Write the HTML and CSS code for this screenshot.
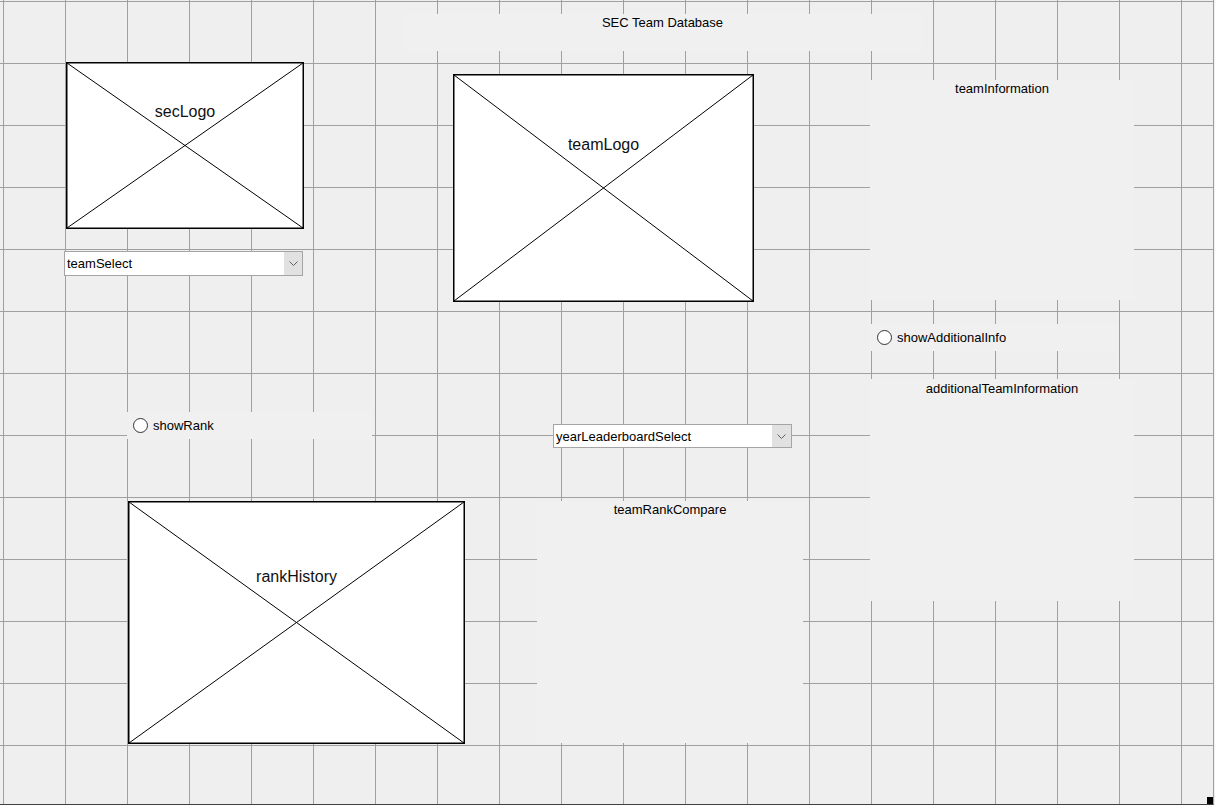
FILE: index.html
```html
<!DOCTYPE html>
<html>
<head>
<meta charset="utf-8">
<link rel="stylesheet" href="styles.css">
</head>
<body>
<div class="form">
  <div class="ctl title-panel"><span class="label">SEC Team Database</span></div>

  <div class="ctl img sec-logo">
    <svg class="cross" viewBox="0 0 100 100" preserveAspectRatio="none"><line x1="0" y1="0" x2="100" y2="100"/><line x1="100" y1="0" x2="0" y2="100"/></svg>
    <span class="img-label">secLogo</span>
  </div>

  <div class="ctl combo team-select">
    <span class="combo-text">teamSelect</span>
    <span class="combo-btn"><svg viewBox="0 0 9 5" width="9" height="5"><polyline points="0.5,0.5 4.5,4.5 8.5,0.5"/></svg></span>
  </div>

  <div class="ctl img team-logo">
    <svg class="cross" viewBox="0 0 100 100" preserveAspectRatio="none"><line x1="0" y1="0" x2="100" y2="100"/><line x1="100" y1="0" x2="0" y2="100"/></svg>
    <span class="img-label">teamLogo</span>
  </div>

  <div class="ctl panel team-info"><span class="label">teamInformation</span></div>

  <div class="ctl radio show-add"><span class="dot"></span><span class="radio-text">showAdditionalInfo</span></div>

  <div class="ctl panel add-info"><span class="label">additionalTeamInformation</span></div>

  <div class="ctl radio show-rank"><span class="dot"></span><span class="radio-text">showRank</span></div>

  <div class="ctl combo year-select">
    <span class="combo-text">yearLeaderboardSelect</span>
    <span class="combo-btn"><svg viewBox="0 0 9 5" width="9" height="5"><polyline points="0.5,0.5 4.5,4.5 8.5,0.5"/></svg></span>
  </div>

  <div class="ctl panel rank-compare"><span class="label">teamRankCompare</span></div>

  <div class="ctl img rank-history">
    <svg class="cross" viewBox="0 0 100 100" preserveAspectRatio="none"><line x1="0" y1="0" x2="100" y2="100"/><line x1="100" y1="0" x2="0" y2="100"/></svg>
    <span class="img-label">rankHistory</span>
  </div>

  <div class="handle"></div>
</div>
</body>
</html>
```

FILE: styles.css
```css
html, body {
  margin: 0;
  padding: 0;
  background: #efefef;
}

.form {
  position: relative;
  width: 1213px;
  height: 804px;
  border-right: 1px solid #a0a0a0;
  border-bottom: 1px solid #404040;
  background-color: #efefef;
  background-image:
    linear-gradient(to right, #a0a0a0 1px, transparent 1px),
    linear-gradient(to bottom, #a0a0a0 1px, transparent 1px);
  background-size: 62px 62px;
  background-position: 3px 1px;
  font-family: "Liberation Sans", Arial, sans-serif;
  font-size: 13px;
  color: #000;
  overflow: hidden;
}

.ctl {
  position: absolute;
  box-sizing: border-box;
}

.label {
  display: block;
  text-align: center;
  line-height: 16px;
  white-space: nowrap;
}

/* title */
.title-panel {
  left: 403px;
  top: 14px;
  width: 519px;
  height: 37px;
  background: #f0f0f0;
}
.title-panel .label { margin-top: 1px; }

/* image placeholders */
.img {
  background: #fff;
  border: 1px solid #000;
  box-shadow: inset 0 0 0 0.5px #000;
}
.cross {
  position: absolute;
  left: 0;
  top: 0;
  width: 100%;
  height: 100%;
}
.cross line {
  stroke: #000;
  stroke-width: 1;
  vector-effect: non-scaling-stroke;
}
.img-label {
  position: absolute;
  left: 0;
  right: 0;
  text-align: center;
  font-size: 16px;
  line-height: 18px;
  color: #111;
}
.sec-logo { left: 66px; top: 62px; width: 238px; height: 167px; }
.sec-logo .img-label { top: 40px; }
.team-logo { left: 453px; top: 74px; width: 301px; height: 228px; }
.team-logo .img-label { top: 61px; }
.rank-history { left: 128px; top: 501px; width: 337px; height: 243px; }
.rank-history .img-label { top: 66px; }

/* combo boxes */
.combo {
  display: flex;
  align-items: center;
  background: #fff;
  border: 1px solid #a5a5a5;
  height: 25px;
  width: 239px;
}
.combo-text {
  flex: 1;
  padding-left: 2px;
  white-space: nowrap;
}
.combo-btn {
  align-self: stretch;
  width: 18px;
  background: #e1e1e1;
  display: flex;
  align-items: center;
  justify-content: center;
}
.combo-btn polyline {
  fill: none;
  stroke: #606060;
  stroke-width: 1;
}
.team-select { left: 64px; top: 251px; }
.year-select { left: 553px; top: 424px; height: 24px; }
.year-select .combo-btn { width: 19px; }

/* panels */
.panel { background: #f0f0f0; }
.team-info { left: 870px; top: 80px; width: 264px; height: 220px; }
.team-info .label { margin-top: 1px; }
.add-info { left: 870px; top: 379px; width: 264px; height: 222px; }
.add-info .label { margin-top: 2px; }
.rank-compare { left: 537px; top: 501px; width: 266px; height: 242px; }
.rank-compare .label { margin-top: 1px; }

/* radios */
.radio {
  display: flex;
  align-items: center;
  background: #f0f0f0;
  white-space: nowrap;
}
.dot {
  width: 15px;
  height: 15px;
  box-sizing: border-box;
  border: 1px solid #333;
  border-radius: 50%;
  background: #fff;
  margin-right: 5px;
  flex: none;
}
.show-add { left: 870px; top: 324px; width: 248px; height: 27px; padding-left: 7px; }
.show-rank { left: 127px; top: 412px; width: 245px; height: 27px; padding-left: 6px; }

/* resize handle */
.handle {
  position: absolute;
  left: 1207px;
  top: 797px;
  width: 7px;
  height: 7px;
  background: #000;
}
```
